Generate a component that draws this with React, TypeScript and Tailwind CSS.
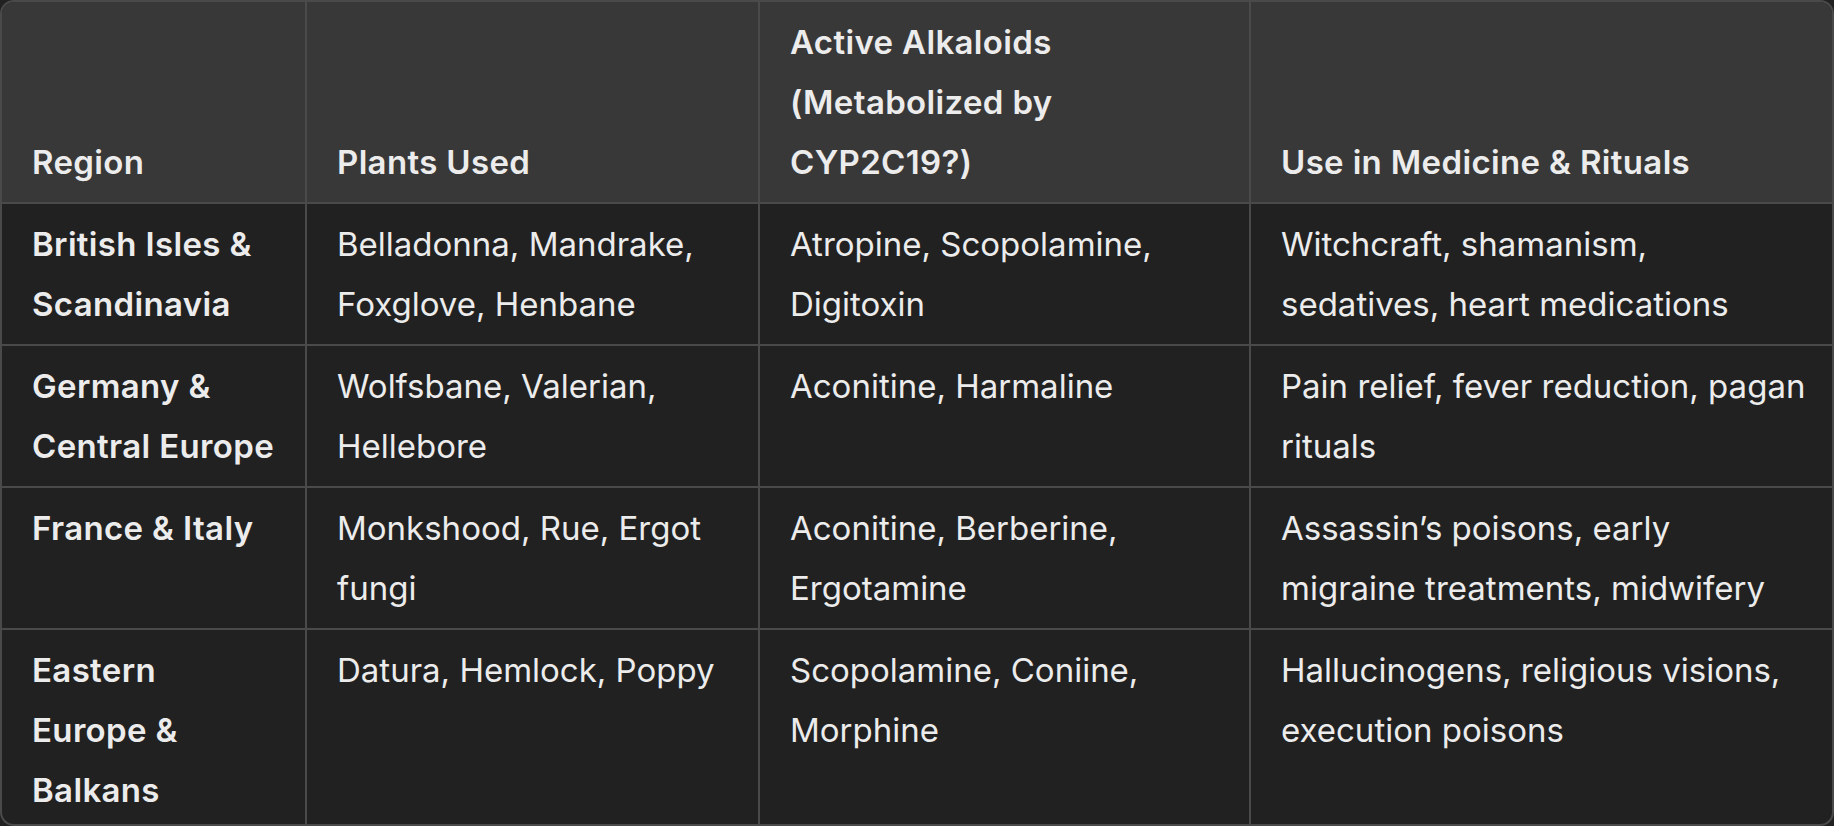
import React from 'react';

const headers = [
  'Region',
  'Plants Used',
  'Active Alkaloids\n(Metabolized by\nCYP2C19?)',
  'Use in Medicine & Rituals',
];

const rows = [
  [
    'British Isles &\nScandinavia',
    'Belladonna, Mandrake,\nFoxglove, Henbane',
    'Atropine, Scopolamine,\nDigitoxin',
    'Witchcraft, shamanism,\nsedatives, heart medications',
  ],
  [
    'Germany &\nCentral Europe',
    'Wolfsbane, Valerian,\nHellebore',
    'Aconitine, Harmaline',
    'Pain relief, fever reduction, pagan\nrituals',
  ],
  [
    'France & Italy',
    'Monkshood, Rue, Ergot\nfungi',
    'Aconitine, Berberine,\nErgotamine',
    'Assassin’s poisons, early\nmigraine treatments, midwifery',
  ],
  [
    'Eastern\nEurope &\nBalkans',
    'Datura, Hemlock, Poppy',
    'Scopolamine, Coniine,\nMorphine',
    'Hallucinogens, religious visions,\nexecution poisons',
  ],
];

const colWidths = ['w-[305px]', 'w-[453px]', 'w-[491px]', 'w-[581px]'];

export default function App() {
  return (
    <div className="w-[1834px] h-[826px] bg-[#212121]">
      <div
        className="h-[826px] overflow-hidden rounded-[14px] border-2 border-[#4a4a4a] bg-[#212121] text-[#ececec] text-[33px] leading-[60px]"
        style={{ fontFamily: 'Inter, "Noto Sans", sans-serif' }}
      >
        <table className="table-fixed border-separate border-spacing-0 w-[1830px]">
          <colgroup>
            {colWidths.map((w, i) => (
              <col key={i} className={w} />
            ))}
          </colgroup>
          <thead>
            <tr className="bg-[#383838]">
              {headers.map((h, i) => (
                <th
                  key={i}
                  className={`align-bottom text-left font-semibold tracking-[0.35px] whitespace-pre px-[30px] py-[10px] ${
                    i < 3 ? 'border-r-2 border-[#4a4a4a]' : ''
                  }`}
                >
                  {h}
                </th>
              ))}
            </tr>
          </thead>
          <tbody>
            {rows.map((row, r) => (
              <tr key={r}>
                {row.map((cell, c) => (
                  <td
                    key={c}
                    className={`align-top whitespace-pre px-[30px] py-[10px] border-t-2 border-[#4a4a4a] ${
                      c < 3 ? 'border-r-2' : ''
                    } ${c === 0 ? 'font-semibold tracking-[0.35px]' : 'font-normal'}`}
                  >
                    {cell}
                  </td>
                ))}
              </tr>
            ))}
          </tbody>
        </table>
      </div>
    </div>
  );
}
